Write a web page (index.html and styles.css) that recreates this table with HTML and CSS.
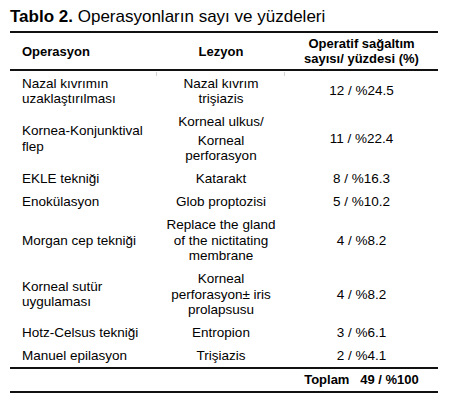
FILE: index.html
```html
<!DOCTYPE html>
<html lang="tr">
<head>
<meta charset="utf-8">
<title>Tablo 2</title>
<link rel="stylesheet" href="styles.css">
</head>
<body>
<div class="page">
  <h1 class="caption"><span class="label">Tablo 2.</span> Operasyonların sayı ve yüzdeleri</h1>
  <table class="ops">
    <colgroup>
      <col class="c1"><col class="c2"><col class="c3">
    </colgroup>
    <thead>
      <tr>
        <th class="op mark-r">Operasyon</th>
        <th class="lz mark-r">Lezyon</th>
        <th class="ct">Operatif sağaltım<br>sayısı/ yüzdesi (%)</th>
      </tr>
    </thead>
    <tbody>
      <tr>
        <td class="op">Nazal kıvrımın<br>uzaklaştırılması</td>
        <td class="lz">Nazal kıvrım<br>trişiazis</td>
        <td class="ct">12 / %24.5</td>
      </tr>
      <tr>
        <td class="op">Kornea-Konjunktival<br>flep</td>
        <td class="lz"><span class="split">Korneal ulkus/</span>Korneal<br>perforasyon</td>
        <td class="ct">11 / %22.4</td>
      </tr>
      <tr>
        <td class="op">EKLE tekniği</td>
        <td class="lz">Katarakt</td>
        <td class="ct">8 / %16.3</td>
      </tr>
      <tr>
        <td class="op">Enokülasyon</td>
        <td class="lz">Glob proptozisi</td>
        <td class="ct">5 / %10.2</td>
      </tr>
      <tr>
        <td class="op">Morgan cep tekniği</td>
        <td class="lz">Replace the gland<br>of the nictitating<br>membrane</td>
        <td class="ct">4 / %8.2</td>
      </tr>
      <tr>
        <td class="op">Korneal sutür<br>uygulaması</td>
        <td class="lz">Korneal<br>perforasyon± iris<br>prolapsusu</td>
        <td class="ct">4 / %8.2</td>
      </tr>
      <tr>
        <td class="op">Hotz-Celsus tekniği</td>
        <td class="lz">Entropion</td>
        <td class="ct">3 / %6.1</td>
      </tr>
      <tr>
        <td class="op">Manuel epilasyon</td>
        <td class="lz">Trişiazis</td>
        <td class="ct">2 / %4.1</td>
      </tr>
    </tbody>
    <tfoot>
      <tr>
        <td class="op"></td>
        <td class="lz tick-r"></td>
        <td class="ct total">Toplam&nbsp;&nbsp;&nbsp;49 / %100</td>
      </tr>
    </tfoot>
  </table>
</div>
</body>
</html>
```

FILE: styles.css
```css
html, body {
  margin: 0;
  padding: 0;
  background: #ffffff;
}

body {
  font-family: "Liberation Sans", Arial, sans-serif;
  color: #000000;
}

.page {
  padding: 7px 12px 0 10px;
}

.caption {
  margin: 0 0 4px 0;
  font-size: 17px;
  line-height: 20px;
  font-weight: normal;
  color: #000;
}

.caption .label {
  font-weight: bold;
}

.ops {
  width: 428px;
  table-layout: fixed;
  border-collapse: collapse;
  font-size: 13.5px;
}

.ops .c1 { width: 147px; }
.ops .c2 { width: 128px; }
.ops .c3 { width: 153px; }

.ops thead tr {
  border-top: 2px solid #111;
  border-bottom: 2px solid #111;
}

.ops th {
  font-weight: bold;
  font-size: 13px;
  line-height: 15px;
  padding: 3px 0;
  vertical-align: middle;
  position: relative;
}

.ops td {
  line-height: 15.5px;
  padding: 4.5px 0 3px 0;
  vertical-align: middle;
  position: relative;
}

.ops .op {
  text-align: left;
  padding-left: 12px;
}

.ops .lz,
.ops .ct {
  text-align: center;
}

.split {
  display: block;
  margin-bottom: 3px;
}

.ops tfoot tr {
  border-top: 2px solid #111;
  border-bottom: 2px solid #111;
}

.ops tfoot td {
  line-height: 16px;
  padding: 3px 0;
}

.total {
  font-weight: bold;
  font-size: 13px;
}

/* faint remnants of column rules */
.mark-r::after {
  content: "";
  position: absolute;
  right: 0;
  bottom: -7px;
  width: 1px;
  height: 4px;
  background: #d4d4d4;
}

.tick-r::after {
  content: "";
  position: absolute;
  right: 1px;
  bottom: -6px;
  width: 1px;
  height: 3px;
  background: #555;
}
```
